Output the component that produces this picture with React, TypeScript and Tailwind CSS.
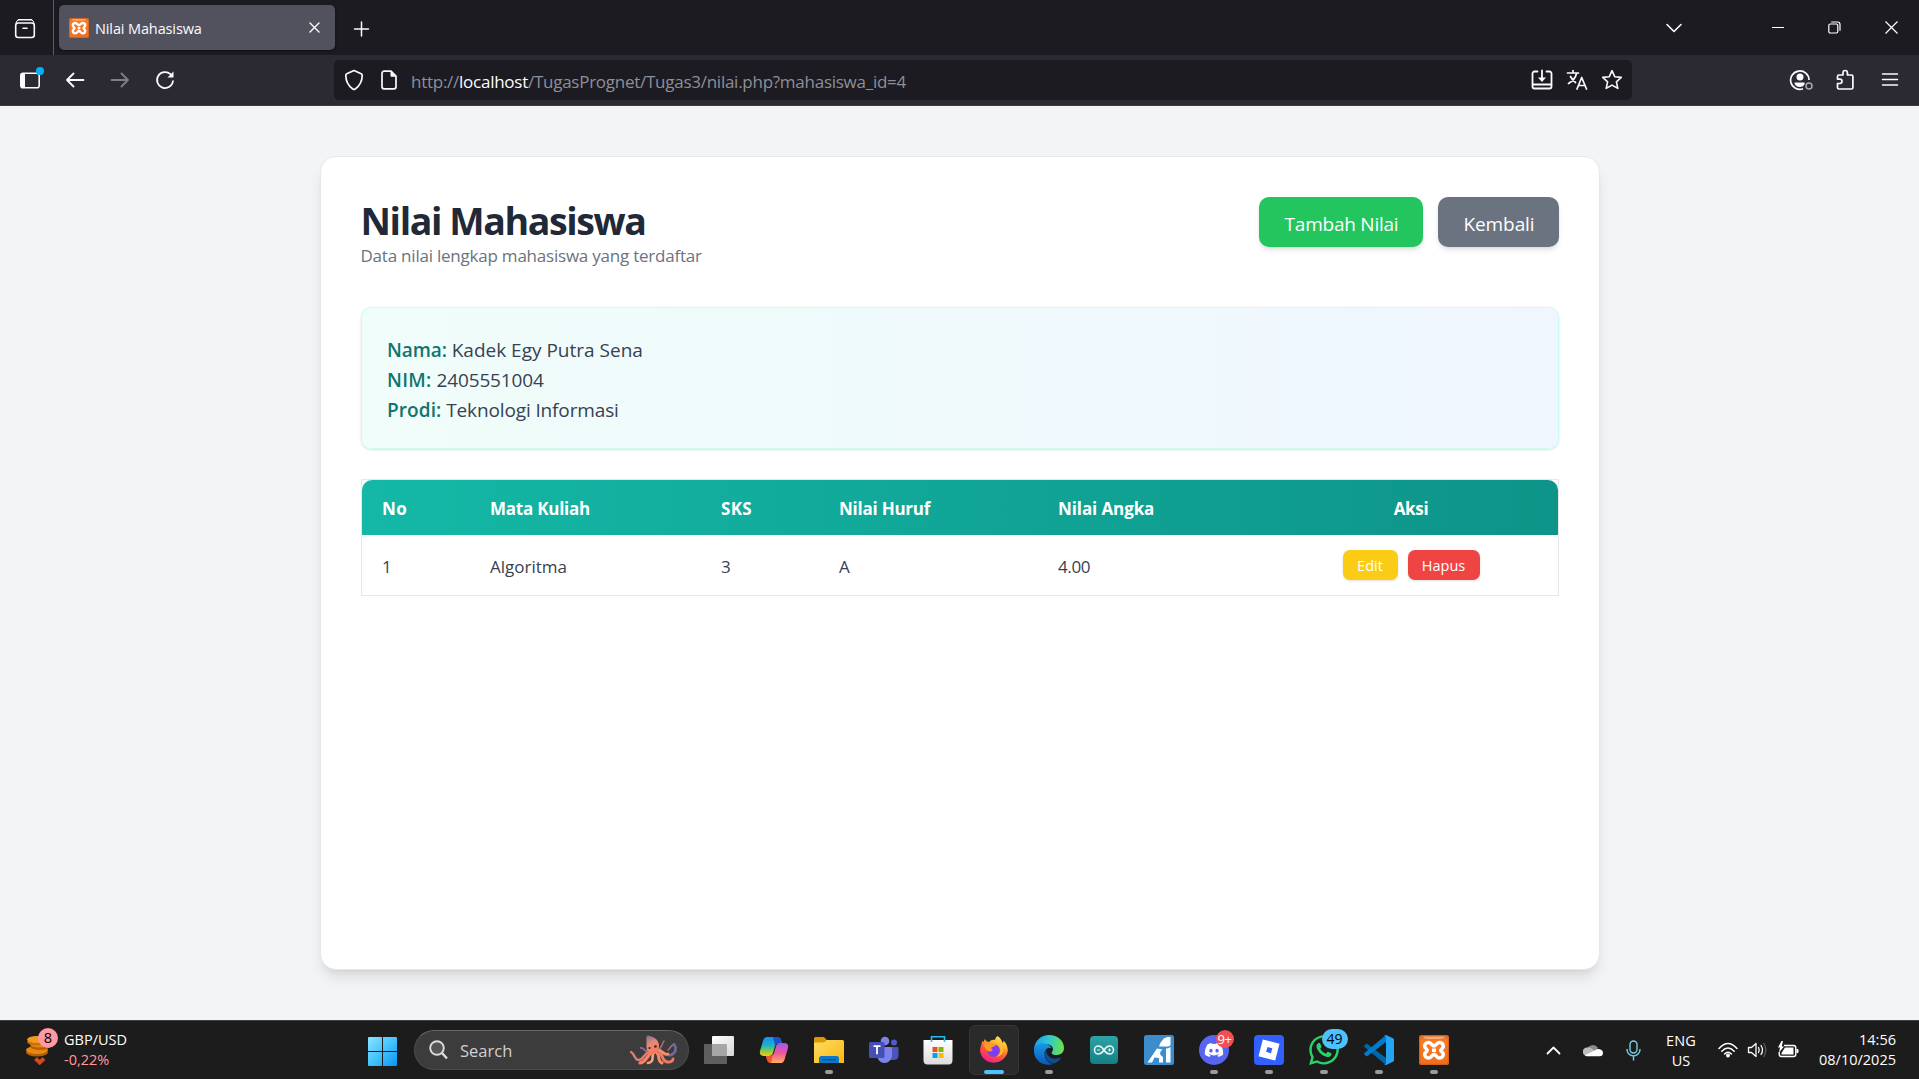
import type { ReactNode } from "react";
import { FaDiscord, FaWhatsapp } from "react-icons/fa";

const stroke = {
  fill: "none",
  stroke: "#fbfbfe",
  strokeWidth: 1.6,
  strokeLinecap: "round" as const,
  strokeLinejoin: "round" as const,
};

function Xampp({ size }: { size: number }) {
  return (
    <svg width={size} height={size} viewBox="0 0 30 30">
      <defs>
        <linearGradient id="xg" x1="0" y1="0" x2="0" y2="1">
          <stop offset="0" stopColor="#d9702c" />
          <stop offset=".2" stopColor="#fb7a24" />
          <stop offset="1" stopColor="#ee6f1f" />
        </linearGradient>
      </defs>
      <rect width="30" height="30" rx="2.5" fill="url(#xg)" />
      <rect x=".7" y=".7" width="28.6" height="28.6" rx="2" fill="none" stroke="#b9561c" strokeWidth="1" opacity=".7" />
      <path d="M4 1.500h22q-1 2.500-5 2.500H9Q5 4 4 1.500z" fill="#f9b083" opacity=".85" />
      <path
        d="M9.500 7.500C12.500 7.500 12.800 11 15 11S17.500 7.500 20.500 7.500C23 7.500 24.300 9.300 24.300 11.300C24.300 13.500 21.800 13.800 21.800 15.300S24.300 17 24.300 19.200C24.300 21.200 23 23 20.500 23C17.500 23 17.200 19.500 15 19.500S12.500 23 9.500 23C7 23 5.700 21.200 5.700 19.200C5.700 17 8.200 16.800 8.200 15.300S5.700 13.500 5.700 11.300C5.700 9.300 7 7.500 9.500 7.500z"
        fill="none"
        stroke="#fff"
        strokeWidth="3.500"
        strokeLinejoin="round"
      />
      <path d="M13 15.300h4" stroke="#fff" strokeWidth="3.600" />
    </svg>
  );
}

function TabStrip() {
  return (
    <div className="flex h-[55px] w-full items-center bg-[#1c1b22]">
      <div className="flex h-full w-[54px] items-center justify-center border-r border-[#5b5b66] pr-[3px] pt-0.5">
        <svg width="22" height="22" viewBox="0 0 22 22" {...stroke}>
          <path d="M4.500 1.700h13" />
          <rect x="1.700" y="5" width="18.600" height="14.500" rx="2.500" />
          <path d="M4.500 1.700Q2.500 2.200 2 5M17.500 1.700q2 .5 2.500 3.300" strokeWidth="1" />
          <path d="M9 10.200h4" />
        </svg>
      </div>
      <div className="ml-[5px] flex h-[45px] w-[276px] items-center rounded-[5px] bg-[#52525e] pl-[10px] shadow-[0_1px_3px_rgba(0,0,0,0.5)]">
        <Xampp size={20} />
        <span className="ml-[6px] mt-[2px] text-[14.5px] tracking-[-0.12px] text-[#fbfbfe]">Nilai Mahasiswa</span>
        <svg className="ml-auto mr-[15px]" width="11" height="11" viewBox="0 0 11 11" {...stroke} strokeWidth="1.400">
          <path d="M1 1l9 9M10 1l-9 9" />
        </svg>
      </div>
      <svg className="ml-[18px] mt-0.5" width="17" height="16" viewBox="0 0 17 16" {...stroke} strokeWidth="1.500">
        <path d="M8.500 1v14M1.500 8h14" />
      </svg>
      <svg className="ml-auto" width="18" height="12" viewBox="0 0 18 12" {...stroke}>
        <path d="M2 2.500l7 7 7-7" />
      </svg>
      <svg className="ml-[89px]" width="12" height="12" viewBox="0 0 12 12">
        <path d="M0 5.500h12" stroke="#fff" />
      </svg>
      <svg className="ml-[44px]" width="13" height="13" viewBox="0 0 13 13" fill="none" stroke="#fff" strokeWidth="1.200">
        <rect x=".8" y="3" width="9" height="9" rx="1.500" />
        <path d="M3.200 1h6.300q2.500 0 2.500 2.500v6.300" />
      </svg>
      <svg className="ml-[44px] mr-[21px]" width="13" height="13" viewBox="0 0 13 13" fill="none" stroke="#fff" strokeWidth="1.200">
        <path d="M.5.5l12 12M12.500.5l-12 12" />
      </svg>
    </div>
  );
}

function Toolbar() {
  return (
    <div className="flex h-[51px] w-full items-center border-b border-[#3c3b44] bg-[#2b2a33]">
      <svg className="ml-[19px]" width="26" height="26" viewBox="0 0 26 26">
        <rect x="1.800" y="6.300" width="18.400" height="14.400" rx="2.300" fill="none" stroke="#fbfbfe" strokeWidth="1.600" />
        <path d="M2 8a2 2 0 0 1 2-2h2v15H4a2 2 0 0 1-2-2z" fill="#fbfbfe" />
        <circle cx="21" cy="4" r="4" fill="#00b3f4" />
      </svg>
      <svg className="ml-[20px]" width="20" height="20" viewBox="0 0 20 20" {...stroke} strokeWidth="1.800">
        <path d="M18.500 10H2M8.500 3.500L2 10l6.500 6.500" />
      </svg>
      <svg className="ml-[25px] opacity-40" width="20" height="20" viewBox="0 0 20 20" {...stroke} strokeWidth="1.800">
        <path d="M1.500 10H18M11.500 3.500L18 10l-6.500 6.500" />
      </svg>
      <svg className="ml-[25px]" width="20" height="20" viewBox="0 0 20 20" {...stroke} strokeWidth="1.700">
        <path d="M18 11a8 8 0 1 1-2.500-6.800" />
        <path d="M18.500 1.500v6h-6z" fill="#fbfbfe" stroke="none" />
      </svg>
      <div className="ml-[159px] flex h-10 w-[1298px] items-center rounded-[5px] bg-[#1c1b22]">
        <svg className="ml-[10px]" width="20" height="22" viewBox="0 0 20 22" {...stroke} strokeWidth="1.700">
          <path d="M10 1.500l7.200 3.200q1 .5 1 1.600c0 6.500-2.700 10.700-7 13.700q-1.200.8-2.400 0c-4.300-3-7-7.200-7-13.700q0-1.100 1-1.600z" />
        </svg>
        <svg className="ml-[17px]" width="16" height="20" viewBox="0 0 16 20" {...stroke} strokeWidth="1.700">
          <path d="M10 1.200H3a2 2 0 0 0-2 2v13.600a2 2 0 0 0 2 2h10a2 2 0 0 0 2-2V6.200z" />
          <path d="M9.500 1l5.700 5.700H10.500a1 1 0 0 1-1-1z" fill="#fbfbfe" stroke="none" />
        </svg>
        <span className="ml-[14px] mt-[3px] whitespace-pre text-[17px] leading-6 tracking-[-0.26px] text-[#8f8f98]">
          http://<span className="text-[#fbfbfe]">localhost</span>/TugasPrognet/Tugas3/nilai.php?mahasiswa_id=4
        </span>
        <div className="ml-auto mr-[9px] flex items-center gap-[13px]">
          <svg width="22" height="22" viewBox="0 0 22 22" {...stroke} strokeWidth="1.800">
            <path d="M6.500 2.500h-3a2 2 0 0 0-2 2v13a2 2 0 0 0 2 2h15a2 2 0 0 0 2-2v-13a2 2 0 0 0-2-2h-3M1.500 15.500h19M11 1.500V10" />
            <path d="M7 8.500h8l-4 4.500z" fill="#fbfbfe" stroke="none" />
          </svg>
          <svg width="22" height="22" viewBox="0 0 22 22" {...stroke} strokeWidth="1.700">
            <path d="M1.500 4h11M7 1.500V4M10.500 4.500C9.500 9 6 12.500 2.500 14.500M4.500 7.500c1.500 3 3 4.500 5 6" />
            <path d="M11 20l4.700-11.500L20.500 20M12.800 16.500h6" />
          </svg>
          <svg width="22" height="22" viewBox="0 0 22 22" {...stroke} strokeWidth="1.600">
            <path d="M11 1.700l2.700 6 6.600.7-4.900 4.400 1.400 6.600L11 16.100l-5.800 3.300 1.400-6.600L1.700 8.400l6.600-.7z" />
          </svg>
        </div>
      </div>
      <svg className="ml-[157px]" width="24" height="22" viewBox="0 0 24 22">
        <path d="M14 19.800A9.200 9.200 0 1 1 20 11" fill="none" stroke="#fbfbfe" strokeWidth="1.700" />
        <circle cx="11" cy="8" r="3.500" fill="#fbfbfe" />
        <path d="M5.500 13.500h9.500c1 0 1 1 .3 2L14 17.300q-4 1.500-7-.6-1.700-1.500-1.500-3.200z" fill="#fbfbfe" />
        <circle cx="20" cy="17" r="3" fill="none" stroke="#a9a9b0" strokeWidth="1.500" />
      </svg>
      <svg className="ml-[22px]" width="20" height="22" viewBox="0 0 20 22" {...stroke} strokeWidth="1.700">
        <path d="M2.500 7.500a1.500 1.500 0 0 1 1.500-1.500h4V3.700a2.200 2.200 0 0 1 4.400 0V6h4a1.500 1.500 0 0 1 1.500 1.500v11a1.500 1.500 0 0 1-1.500 1.500H4a1.500 1.500 0 0 1-1.500-1.500v-4h2.300a2.200 2.200 0 0 0 0-4.400H2.500z" />
      </svg>
      <svg className="ml-[26px]" width="18" height="14" viewBox="0 0 18 14" {...stroke} strokeWidth="1.500">
        <path d="M1.500 1h15M1.500 6.500h15M1.500 12h15" />
      </svg>
    </div>
  );
}

const th = "text-left font-bold text-white";

function Page() {
  return (
    <div className="flex h-[914px] w-full justify-center bg-[#f3f4f6] pt-[50px]">
      <div className="h-[814px] w-[1280px] rounded-2xl border border-gray-200 bg-white p-10 shadow-[0_10px_15px_-3px_rgba(0,0,0,0.1),0_4px_6px_-4px_rgba(0,0,0,0.1)]">
        <div className="flex h-[110px] items-start justify-between">
          <div>
            <h1 className="text-[37.5px] font-bold leading-[48px] tracking-[-1.4px] text-[#1f2937]">Nilai Mahasiswa</h1>
            <p className="text-[17px] leading-[21px] tracking-[-0.22px] text-[#6b7280]">Data nilai lengkap mahasiswa yang terdaftar</p>
          </div>
          <div className="flex gap-[15px] text-[19px] text-white">
            <button className="flex h-[50px] w-[164px] items-center justify-center rounded-[10px] bg-[#22c55e] pl-[2px] pt-[5px] tracking-[-0.24px] shadow-md">Tambah Nilai</button>
            <button className="flex h-[50px] w-[121px] items-center justify-center rounded-[10px] bg-[#6b7280] pl-[2px] pt-[5px] tracking-[-0.1px] shadow-md">Kembali</button>
          </div>
        </div>
        <div className="h-[142px] rounded-[10px] border border-[#ccfbf1] bg-[linear-gradient(to_right,#f0fdfa,#eff6ff)] px-[25.5px] pt-[27px] text-[19px] leading-[30px] text-[#374151] shadow-sm">
          <p><span className="font-semibold tracking-[-0.1px] text-[#0f766e]">Nama:</span> Kadek Egy Putra Sena</p>
          <p><span className="font-semibold tracking-[0.3px] text-[#0f766e]">NIM:</span> <span className="tracking-[-0.15px]">2405551004</span></p>
          <p className="tracking-[-0.13px]"><span className="font-semibold tracking-[0.1px] text-[#0f766e]">Prodi:</span> Teknologi Informasi</p>
        </div>
        <div className="mt-[30px] border border-[#e5e7eb] text-[17px]">
          <div className="grid h-[55px] grid-cols-[108px_231px_118px_219px_227px_1fr] items-center rounded-t-[10px] bg-[linear-gradient(to_right,#14b8a6,#0d9488)] px-[20.5px] pt-[3px]">
            <span className="text-left font-bold tracking-[0.4px] text-white">No</span>
            <span className="text-left font-bold tracking-[-0.24px] text-white">Mata Kuliah</span>
            <span className="text-left font-bold tracking-[0.3px] text-white">SKS</span>
            <span className="text-left font-bold tracking-[-0.24px] text-white">Nilai Huruf</span>
            <span className="text-left font-bold tracking-[-0.1px] text-white">Nilai Angka</span>
            <span className="text-center font-bold tracking-[-0.3px] text-white">Aksi</span>
          </div>
          <div className="grid h-[60px] grid-cols-[108px_231px_118px_219px_227px_1fr] items-center px-[20.5px] text-[#374151]">
            <span className="pt-1">1</span>
            <span className="pt-1">Algoritma</span>
            <span className="pt-1">3</span>
            <span className="pt-1">A</span>
            <span className="pt-1 tracking-[-0.4px]">4.00</span>
            <span className="flex justify-center gap-[10px] text-[14.5px] text-white">
              <button className="flex h-[30px] w-[55px] items-center justify-center rounded-[7px] bg-[#facc15] pt-0.5 shadow-sm">Edit</button>
              <button className="flex h-[30px] w-[72px] items-center justify-center rounded-[7px] bg-[#ef4444] pt-0.5 shadow-sm">Hapus</button>
            </span>
          </div>
        </div>
      </div>
    </div>
  );
}

function TaskIcon({ children, dot, active }: { children: ReactNode; dot?: boolean; active?: boolean }) {
  return (
    <div className="flex w-[55px] justify-center">
      <div className={active ? "relative flex size-[50px] items-center justify-center rounded-md border border-[#363636] bg-[#2a2a2a]" : "relative flex size-[50px] items-center justify-center"}>
        {children}
        {dot && <i className="absolute bottom-px left-1/2 h-1 w-2 -translate-x-1/2 rounded-full bg-[#9b9b9b]" />}
        {active && <i className="absolute bottom-0 left-1/2 h-1 w-5 -translate-x-1/2 rounded-full bg-[#4cc2ff]" />}
      </div>
    </div>
  );
}

function Octopus() {
  return (
    <svg width="50" height="32" viewBox="0 0 50 32" fill="none" strokeLinecap="round">
      <defs>
        <linearGradient id="oc" x1="0" y1="0" x2=".3" y2="1">
          <stop offset="0" stopColor="#7d6a90" />
          <stop offset=".45" stopColor="#e08a7a" />
          <stop offset="1" stopColor="#ff7a55" />
        </linearGradient>
      </defs>
      <path d="M20 17C14 19 13 27 8 26 4 25 5 20 1 18" stroke="#d97f78" strokeWidth="2.400" />
      <path d="M17 17c-3 0-4-4-6-3" stroke="#8b6d98" strokeWidth="2" />
      <path d="M21 19c-4 3-5 9-11 10" stroke="#fb8262" strokeWidth="3.200" />
      <path d="M23 20c-1 4 1 8-5 9" stroke="#ff9f78" strokeWidth="2.600" />
      <path d="M27 19c3 2 0 8 5 10" stroke="#ff8a62" strokeWidth="3" />
      <path d="M28 18c6 2 3 9 9 10 5 .5 6-2 6-3" stroke="#ef7965" strokeWidth="2.900" />
      <path d="M28 17c6-1 8 6 13 4 5-2 6-7 3-11" stroke="#6c6d9c" strokeWidth="2.600" />
      <path d="M28 16c5 0 5 6 10 4" stroke="#ff8a66" strokeWidth="2.800" />
      <path d="M29 15c3-1 3-6 5-8M38 16c2-1 2-4 5-5" stroke="#a66f85" strokeWidth="1.500" />
      <path d="M17 1.500c6 .5 12 4 12 10 0 5-3 9-6 9-4 0-7-4-6.500-9C17 7 15.500 5 17 1.500z" fill="url(#oc)" />
      <circle cx="19.500" cy="14" r="1.100" fill="#31203c" />
      <circle cx="25.500" cy="12.500" r="1.300" fill="#31203c" />
    </svg>
  );
}

function Taskbar() {
  return (
    <div className="flex h-[59px] w-full items-center border-t border-[#3d4144] bg-[#1c1c1c] text-[14.5px] leading-5 text-white">
      <div className="relative ml-[25px] h-[44px] w-[39px]">
        <svg width="34" height="44" viewBox="0 0 34 44">
          <g fill="#e8890e">
            <ellipse cx="12" cy="24.500" rx="11" ry="4" fill="#b45f08" />
            <ellipse cx="12" cy="22" rx="11" ry="4" />
            <ellipse cx="15" cy="18.500" rx="10" ry="3.500" fill="#b45f08" />
            <ellipse cx="15" cy="16" rx="10" ry="3.500" />
            <ellipse cx="12" cy="14" rx="10" ry="3.500" fill="#c8700a" />
            <ellipse cx="12" cy="11.500" rx="10" ry="3.500" fill="#f29a1d" />
          </g>
          <path d="M10.500 30.500l4.200 4 4.300-4" fill="none" stroke="#d8471c" strokeWidth="4" />
        </svg>
        <span className="absolute left-[13px] top-0 flex size-5 items-center justify-center rounded-full bg-[#ff99a4] text-[14.500px] text-black">8</span>
      </div>
      <div className="w-[304px]">
        <div>GBP/USD</div>
        <div className="text-[#ff99a4]">-0,22%</div>
      </div>
      <svg className="mt-0.5" width="29" height="29" viewBox="0 0 29 29">
        <defs>
          <linearGradient id="wg" x1="0" y1="0" x2="1" y2="1">
            <stop offset="0" stopColor="#8be3ff" />
            <stop offset=".5" stopColor="#45c4fb" />
            <stop offset="1" stopColor="#0794f5" />
          </linearGradient>
        </defs>
        <path d="M1 0h13v14H0V1q0-1 1-1zM15 0h13q1 0 1 1v13H15zM0 15h14v14H1q-1 0-1-1zM15 15h14v13q0 1-1 1H15z" fill="url(#wg)" />
      </svg>
      <div className="ml-[17px] flex h-10 w-[275px] items-center rounded-full border border-[#4b4b4b] border-t-[#666] bg-[#3c3c3c]">
        <svg className="ml-[14px]" width="19" height="20" viewBox="0 0 19 20" fill="none" stroke="#dcdcdc">
          <circle cx="8" cy="8" r="6.800" fill="#555" strokeWidth="1.900" />
          <path d="M13 13l5 5.500" strokeWidth="2.400" />
        </svg>
        <span className="ml-[12px] mt-0.5 text-[16.500px] text-[#d0d0d0]">Search</span>
        <span className="ml-auto mr-[8px]"><Octopus /></span>
      </div>
      <div className="ml-[2px] flex items-center">
        <TaskIcon>
          <svg width="30" height="28" viewBox="0 0 30 28">
            <defs>
              <linearGradient id="tv" x1="0" y1="0" x2="1" y2="1"><stop stopColor="#fff" /><stop offset="1" stopColor="#d6d6d6" /></linearGradient>
            </defs>
            <rect y="8" width="23" height="20" rx="1" fill="#5e5e5e" />
            <rect x="8" width="22" height="20" rx="1" fill="url(#tv)" />
            <path d="M8 8h14q1 0 1 1v11H8z" fill="#a6a6a6" />
          </svg>
        </TaskIcon>
        <TaskIcon>
          <svg width="30" height="28" viewBox="0 0 30 28">
            <defs>
              <linearGradient id="c1" x1="0" y1="0" x2="0" y2="1"><stop stopColor="#1b8df0" /><stop offset=".45" stopColor="#18b6c9" /><stop offset=".75" stopColor="#8ccb3d" /><stop offset="1" stopColor="#ffc713" /></linearGradient>
              <linearGradient id="c2" x1="0" y1="0" x2="0" y2="1"><stop stopColor="#a258f0" /><stop offset=".5" stopColor="#f0569c" /><stop offset="1" stopColor="#ffae5c" /></linearGradient>
            </defs>
            <path d="M8 1h10q3 0 4 3l1 3h-4q-2 0-3 3l-2 7q-1 3-4 3H5Q0 20 1 15L4 5q1-4 4-4z" fill="url(#c1)" />
            <path d="M14 1h4q3 0 4 3l1 3h-4l-3 2z" fill="#1c52c8" />
            <path d="M22 27H12q-3 0-4-4l-1-3h4q3 0 4-3l2-7q1-3 4-3h4q5 0 4 5l-3 10q-1 5-4 5z" fill="url(#c2)" />
            <path d="M7 20h4q2 0 3-1.500l-2 8.500q-3 0-4-3z" fill="#f2552c" />
          </svg>
        </TaskIcon>
        <TaskIcon dot>
          <svg width="30" height="28" viewBox="0 0 30 28">
            <defs>
              <linearGradient id="fe" x1="0" y1="0" x2="1" y2="1"><stop stopColor="#ffdc67" /><stop offset="1" stopColor="#fbb70c" /></linearGradient>
            </defs>
            <path d="M0 10V2.500Q0 1 1.500 1H9q1 0 2 1l2.500 3L10 10z" fill="#dc9a02" />
            <path d="M0 6.500h9q1.500 0 2.500-1.200l1-1.300H28.500q1.500 0 1.500 1.500V27H0z" fill="url(#fe)" />
            <path d="M5 27v-4.500Q5 20 7.500 20h15q2.500 0 2.500 2.500V27z" fill="#0c78cc" />
            <path d="M8.500 23.700h13" stroke="#074f91" strokeWidth="1.300" />
          </svg>
        </TaskIcon>
        <TaskIcon>
          <svg width="30" height="28" viewBox="0 0 30 28">
            <circle cx="25" cy="6.500" r="3" fill="#5059c9" />
            <path d="M21 11h7.500q1 0 1 1v7.500q0 4-4 4.500h-4.500z" fill="#4b53bc" />
            <circle cx="16" cy="5" r="4.300" fill="#7b83eb" />
            <path d="M9 11h13q1 0 1 1v7.500a7.500 7.500 0 0 1-15 0V12q0-1 1-1z" fill="#7b83eb" />
            <rect x="0" y="6" width="15.500" height="16" rx="1.500" fill="#464eb8" />
            <path d="M4.500 10.200h7M8 10.200v8" stroke="#fff" strokeWidth="1.800" />
          </svg>
        </TaskIcon>
        <TaskIcon>
          <svg className="-ml-px" width="30" height="30" viewBox="0 0 30 30">
            <defs>
              <linearGradient id="ms" x1="0" y1="0" x2="0" y2="1"><stop stopColor="#fff" /><stop offset="1" stopColor="#dcdcdc" /></linearGradient>
            </defs>
            <path d="M.5 5h29v20q0 4.500-4 4.500h-21q-4 0-4-4.500z" fill="url(#ms)" />
            <path d="M8.500 7V1.700h13V7" fill="none" stroke="#1fc0ee" strokeWidth="1.600" />
            <path fill="#f25022" d="M9.500 12h5v5h-5z" />
            <path fill="#7fba00" d="M15.500 12h5v5h-5z" />
            <path fill="#00a4ef" d="M9.500 18h5v5h-5z" />
            <path fill="#ffb900" d="M15.500 18h5v5h-5z" />
          </svg>
        </TaskIcon>
        <TaskIcon active>
          <svg width="30" height="30" viewBox="0 0 30 30">
            <defs>
              <linearGradient id="ff" x1=".8" y1="0" x2=".3" y2="1"><stop stopColor="#fff04d" /><stop offset=".3" stopColor="#ffb52e" /><stop offset=".6" stopColor="#ff5b36" /><stop offset="1" stopColor="#f0188f" /></linearGradient>
            </defs>
            <path d="M18.500 1c3 2 4.500 4.500 5 7 1-.5 1-1.500 1-2.500 3 3 4.300 6.500 4.300 10A14 13.500 0 0 1 1 16C1 11.500 3 9 3 6l1.500 1 1.300-3c1 2 2.500 3 4.500 3 1-2 4-2.500 5.500-2 .5-1.500 1.500-3 2.700-4z" fill="url(#ff)" />
            <circle cx="14.500" cy="15.500" r="6.300" fill="#7a3ff0" />
            <path d="M4.500 9.500c3-3 7-2 8.500-1 1.500.8 3 1 4.500.7-1 2.300-4 2.500-5 3.300-.7.800.5 2 1.500 2.300-2 2.500-4.500 2-6 .7-1.500-1.500-2.500-4-3.500-6z" fill="#ff9a24" />
            <path d="M13.500 8.300c4-1 8 2 8 6.700 0 3-2 6-5 6.800 6 0 8.500-4.500 7.500-9-.8-3.500-4-6.500-7-5.500z" fill="#ffbd30" />
          </svg>
        </TaskIcon>
        <TaskIcon dot>
          <svg width="30" height="30" viewBox="0 0 30 30">
            <defs>
              <linearGradient id="e1" x1="0" y1=".3" x2="1" y2=".4"><stop stopColor="#1e9de8" /><stop offset=".5" stopColor="#31c8cf" /><stop offset="1" stopColor="#6be446" /></linearGradient>
              <linearGradient id="e2" x1="0" y1="0" x2="0" y2="1"><stop stopColor="#1798e8" /><stop offset="1" stopColor="#0a59b8" /></linearGradient>
            </defs>
            <path d="M0 14C1 5 7.500 0 15 0c9 0 15 6 15 13 0 5-4 7-7.500 7-4 0-5.500-1.500-4.500-3 3-4-1-8-6-8C6 9 1 11 0 14z" fill="url(#e1)" />
            <path d="M0 14C1.500 9 7 7.500 11 8.500c4 .8 6 3 6.500 5-3-2-7 1-7 5.500 0 5 4 9.500 9 10C10 32-1 26 0 14z" fill="url(#e2)" />
            <path d="M12 14c-4 6 1 14 8 14.500 3-.8 6-3.500 7.500-6.500-5 3-12 2-14.500-3-.8-1.700-1-3.500-1-5z" fill="#104e92" />
          </svg>
        </TaskIcon>
        <TaskIcon>
          <svg width="28" height="28" viewBox="0 0 28 28">
            <defs>
              <linearGradient id="ar" x1="0" y1="0" x2="0" y2="1"><stop stopColor="#2ea3a6" /><stop offset="1" stopColor="#148086" /></linearGradient>
            </defs>
            <rect width="28" height="28" rx="4" fill="url(#ar)" />
            <path d="M14 14c-2-3-3.500-4-5.500-4a4 4 0 0 0 0 8c2 0 3.500-1 5.500-4s3.500-4 5.500-4a4 4 0 0 1 0 8c-2 0-3.500-1-5.500-4z" fill="none" stroke="#e8f6f6" strokeWidth="1.600" />
            <path d="M7 14h3M18 14h3M19.500 12.500v3" stroke="#e8f6f6" />
          </svg>
        </TaskIcon>
        <TaskIcon>
          <svg width="30" height="30" viewBox="0 0 30 30">
            <rect width="30" height="30" rx="2.500" fill="#3d8dcc" />
            <path d="M15 11.500Q17 4 23.500 2H26.500v8q-1 1.500-3 1.500z" fill="#fff" />
            <path d="M22 13.500q2.500 0 4.500-1.500v15.500H22z" fill="#fff" />
            <path d="M3.500 27.500L13 13.500l5.500 1q-2.500 1.500-2.500 4 0 1.500 3 3.500v5.500h-4V23l-4.500-.5-2.500 5z" fill="#fff" />
          </svg>
        </TaskIcon>
        <TaskIcon dot>
          <div className="flex size-[30px] items-center justify-center rounded-full bg-[#5865f2]"><FaDiscord size={20} color="#fff" /></div>
          <span className="absolute left-[27px] top-[5px] flex h-[18px] w-[18px] items-center justify-center rounded-full bg-[#f04f56] text-[13px] tracking-[-0.5px]">9+</span>
        </TaskIcon>
        <TaskIcon dot>
          <svg width="30" height="30" viewBox="0 0 30 30">
            <rect width="30" height="30" rx="4" fill="#335fff" />
            <path d="M8.800 4.500l16.700 4.300-4.300 16.700L4.500 21.200zM13.500 12l-1.400 4.800 4.900 1.400 1.300-4.900z" fill="#fff" fillRule="evenodd" />
          </svg>
        </TaskIcon>
        <TaskIcon dot>
          <FaWhatsapp size={34} color="#25d366" />
          <span className="absolute left-[23px] top-[4px] flex h-5 w-[26px] items-center justify-center rounded-full bg-[#4cc2ff] text-[14px] text-black">49</span>
        </TaskIcon>
        <TaskIcon dot>
          <svg width="30" height="30" viewBox="0 0 30 30">
            <path d="M0 11l2-2q.7-.5 1.500 0L22 23v7L.5 12q-.7-.5-.5-1z" fill="#0065a9" />
            <path d="M0 19l2 2q.7.500 1.500 0L22 7V0L.5 18q-.7.500-.5 1z" fill="#007acc" />
            <path d="M22 0l7 3.200q1 .5 1 1.500v20.600q0 1-1 1.500L22 30q-1.200.2-2-.7 1.500.5 2-1V1.700q-.5-1.500-2-1 .8-.9 2-.7z" fill="#24a5f1" />
          </svg>
        </TaskIcon>
        <TaskIcon dot><Xampp size={30} /></TaskIcon>
      </div>
      <div className="ml-auto flex items-center pr-[23px]">
        <div className="flex w-10 justify-center">
          <svg width="15" height="9" viewBox="0 0 15 9" {...stroke} strokeWidth="1.800"><path d="M1.500 7.500l6-6 6 6" /></svg>
        </div>
        <div className="flex w-10 justify-center">
          <svg width="20" height="14" viewBox="0 0 20 14">
            <path d="M4 6a6 5.500 0 0 1 11-1l-5 4z" fill="#8d8d8d" />
            <path d="M4 13a4 4 0 0 1 0-8.500c3-.5 5 1.500 8 3.500z" fill="#bdbdbd" />
            <path d="M2 12.300l10-5c2-2.300 8-1.300 8 2.400a3.500 3.500 0 0 1-3.500 3.500H4q-1.500 0-2-.9z" fill="#fff" />
          </svg>
        </div>
        <div className="flex w-10 justify-center">
          <svg width="15" height="21" viewBox="0 0 15 21" fill="none" stroke="#76d1e5" strokeWidth="1.400" strokeLinecap="round">
            <rect x="4" y="1" width="7" height="12" rx="3.500" />
            <path d="M1 9.500a6.500 6.500 0 0 0 13 0M7.500 16v4" />
          </svg>
        </div>
        <div className="w-14 pt-0.5 text-center"><div className="tracking-[0.2px]">ENG</div><div>US</div></div>
        <div className="flex w-[38px] justify-center">
          <svg width="20" height="16" viewBox="0 0 20 16" {...stroke} strokeWidth="1.500">
            <path d="M1 6.500q9-10 18 0M3.800 9.300q6.200-6.500 12.400 0M6.600 12q3.400-3.500 6.800 0" />
            <circle cx="10" cy="13.500" r="1.200" fill="#fff" />
          </svg>
        </div>
        <div className="flex w-5 justify-center">
          <svg width="20" height="18" viewBox="0 0 20 18" {...stroke} strokeWidth="1.300">
            <path d="M1.500 6.500h3L9 2.500v13L4.500 11.500h-3zM11.500 6.500q1.500 2.500 0 5M14 4.500q3 4.500 0 9" />
            <path d="M16.800 2.500q4 6.500 0 13" stroke="#5a5a5a" />
          </svg>
        </div>
        <div className="flex w-[42px] justify-center">
          <svg width="22" height="18" viewBox="0 0 22 18">
            <path d="M7 4.500h9.500q2.300 0 2.300 2.300v6.400q0 2.300-2.300 2.300h-12q-2.300 0-2.300-2.300V11" fill="none" stroke="#fff" strokeWidth="1.400" />
            <path d="M8 6.500h8.500v7H4.500V12zM19.500 8h1q1 0 1 1v2q0 1-1 1h-1z" fill="#fff" />
            <path d="M4.500 0L1 6.500h2L2 11.500l5-6H4.800L6 0z" fill="#fff" />
          </svg>
        </div>
        <div className="w-[87px] text-right"><div>14:56</div><div>08/10/2025</div></div>
      </div>
    </div>
  );
}

export default function App() {
  return (
    <div className="flex h-[1079px] w-full flex-col overflow-hidden font-['Open_Sans','Noto_Sans',sans-serif]">
      <TabStrip />
      <Toolbar />
      <Page />
      <Taskbar />
    </div>
  );
}
